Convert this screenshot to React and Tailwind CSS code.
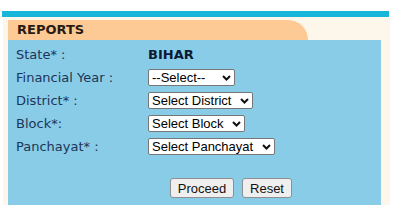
// App.jsx
function FakeSelect({ label, width }) {
  return (
    <div
      className={`flex h-[17px] items-center justify-between rounded-[2px] border border-[#767676] bg-white pl-[3px] pr-[3px] text-[13px] leading-none text-black ${width}`}
      style={{ fontFamily: '"Liberation Sans", Arial, sans-serif' }}
    >
      <span className="whitespace-pre">{label}</span>
      <svg width="9" height="6" viewBox="0 0 9 6" className="ml-[3px] shrink-0">
        <path d="M1 1 L4.5 4.5 L8 1" fill="none" stroke="#111" strokeWidth="2" />
      </svg>
    </div>
  );
}

export default function App() {
  const rows = [
    { label: 'Financial Year :', select: '--Select--  ', width: 'w-[87px]' },
    { label: 'District* :', select: 'Select District', width: 'w-[105px]' },
    { label: 'Block*:', select: 'Select Block', width: 'w-[97px]' },
    { label: 'Panchayat* :', select: 'Select Panchayat', width: 'w-[127px]' },
  ];

  return (
    <div
      className="h-[215px] w-[395px] bg-white pt-[11px]"
      style={{ fontFamily: '"DejaVu Sans", Verdana, sans-serif' }}
    >
      {/* top cyan bar */}
      <div className="ml-[2px] h-[6px] w-[387px] bg-[#19b6dc]"></div>

      {/* cream frame */}
      <div className="ml-[3px] h-[188px] w-[387px] bg-[#fdf6ea] pl-[5px] pt-[3px]">
        {/* tab */}
        <div className="flex h-[20px] w-[300px] items-center rounded-tr-[22px] bg-[#fdca96] pl-[9px] text-[13px] font-bold text-[#2a1a10]">
          REPORTS
        </div>

        {/* panel */}
        <div className="h-[165px] w-[373px] bg-[#88cce8] pl-[8px] pt-[3px] text-[13px] text-[#1d3557]">
          <div className="flex h-[23px] items-center">
            <div className="w-[132px]">State* :</div>
            <div className="font-bold text-[#0d1a33]">BIHAR</div>
          </div>
          {rows.map((r) => (
            <div key={r.label} className="flex h-[23px] items-center">
              <div className="w-[132px]">{r.label}</div>
              <FakeSelect label={r.select} width={r.width} />
            </div>
          ))}

          <div
            className="mt-[20px] flex gap-[8px] pl-[154px] text-[13px] text-[#111]"
            style={{ fontFamily: '"Liberation Sans", Arial, sans-serif' }}
          >
            <button className="h-[20px] w-[64px] rounded-[3px] border border-[#8f8f8f] bg-[#efefef]">Proceed</button>
            <button className="h-[20px] w-[50px] rounded-[3px] border border-[#8f8f8f] bg-[#efefef]">Reset</button>
          </div>
        </div>
      </div>
    </div>
  );
}
